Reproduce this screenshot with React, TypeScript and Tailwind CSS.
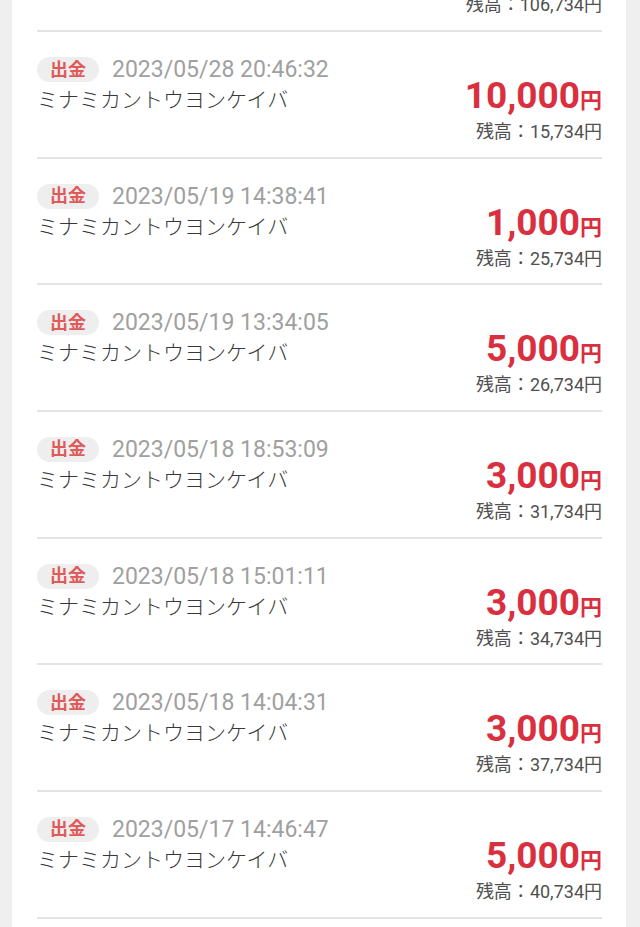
import React from "react";

type Row = { kind: string; date: string; name: string; amount: string; balance: string };

const rows: Row[] = [
  { kind: "入金", date: "2023/05/29 09:12:44", name: "ミナミカントウヨンケイバ", amount: "91,000", balance: "106,734" },
  { kind: "出金", date: "2023/05/28 20:46:32", name: "ミナミカントウヨンケイバ", amount: "10,000", balance: "15,734" },
  { kind: "出金", date: "2023/05/19 14:38:41", name: "ミナミカントウヨンケイバ", amount: "1,000", balance: "25,734" },
  { kind: "出金", date: "2023/05/19 13:34:05", name: "ミナミカントウヨンケイバ", amount: "5,000", balance: "26,734" },
  { kind: "出金", date: "2023/05/18 18:53:09", name: "ミナミカントウヨンケイバ", amount: "3,000", balance: "31,734" },
  { kind: "出金", date: "2023/05/18 15:01:11", name: "ミナミカントウヨンケイバ", amount: "3,000", balance: "34,734" },
  { kind: "出金", date: "2023/05/18 14:04:31", name: "ミナミカントウヨンケイバ", amount: "3,000", balance: "37,734" },
  { kind: "出金", date: "2023/05/17 14:46:47", name: "ミナミカントウヨンケイバ", amount: "5,000", balance: "40,734" },
  { kind: "出金", date: "2023/05/17 10:02:15", name: "ミナミカントウヨンケイバ", amount: "5,000", balance: "45,734" },
];

function Item({ r }: { r: Row }) {
  return (
    <div className="h-[126.67px] shrink-0 border-b-2 border-[#e4e4e4] pt-[25px] flex justify-between">
      <div className="flex flex-col">
        <div className="h-[25px] flex items-center gap-[13px]">
          <span className="w-[62px] h-[25px] rounded-full bg-[#eeeeee] text-[18px] font-bold text-[#e05a5a] flex items-center justify-center leading-none">
            {r.kind}
          </span>
          <span className="text-[23px] leading-[25px] text-[#a0a0a0]">{r.date}</span>
        </div>
        <div className="mt-[4px] h-[28px] leading-[28px] text-[21px] font-light text-[#383838]">{r.name}</div>
      </div>
      <div className="flex flex-col items-end mt-[19px]">
        <div className="leading-[40px] h-[40px] font-bold text-[#d92f3f] whitespace-nowrap">
          <span className="text-[37px]">{r.amount}</span>
          <span className="text-[22px]">円</span>
        </div>
        <div className="mt-[4px] leading-[24px] text-[18px] text-[#505050] whitespace-nowrap">
          残高：{r.balance}円
        </div>
      </div>
    </div>
  );
}

export default function App() {
  return (
    <div
      className="w-[640px] h-[927px] overflow-hidden bg-[#efefef]"
      style={{ fontFamily: 'Roboto, "Noto Sans CJK JP", sans-serif' }}
    >
      <div className="ml-[12px] w-[614px] h-full bg-white pr-[24px] pl-[25px] flex flex-col overflow-hidden">
        <div className="mt-[-94.67px] flex flex-col">
          {rows.map((r, i) => (
            <Item key={i} r={r} />
          ))}
        </div>
      </div>
    </div>
  );
}
